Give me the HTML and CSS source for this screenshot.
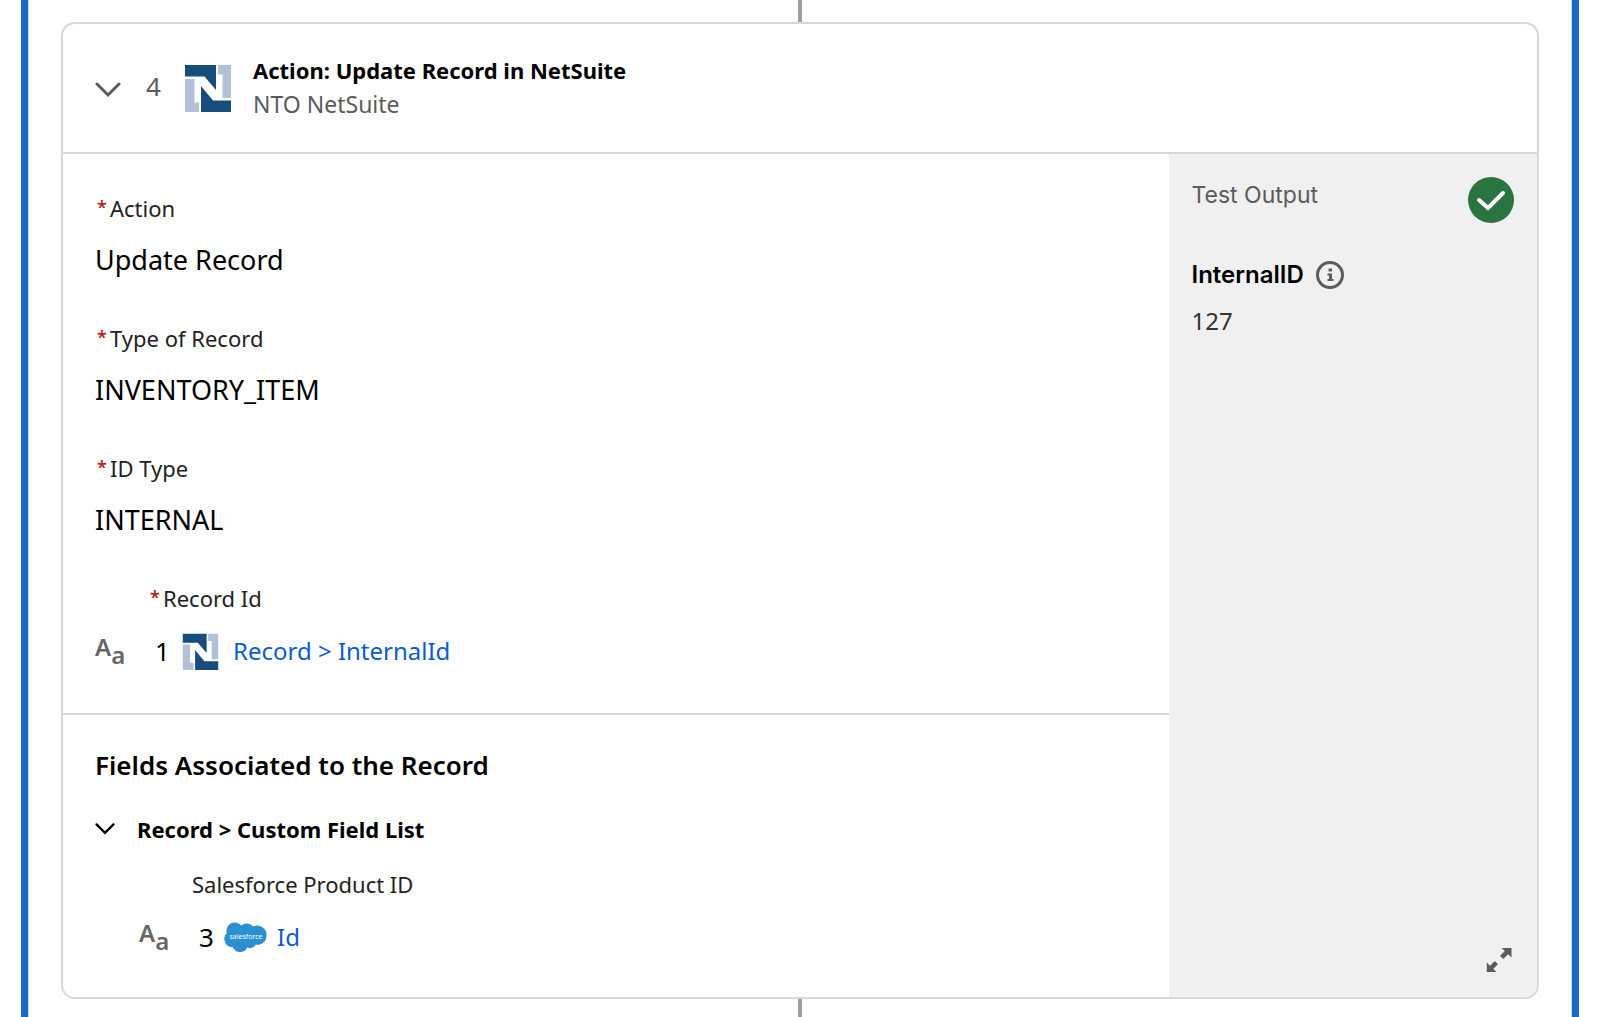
FILE: index.html
```
<!DOCTYPE html>
<html lang="en">

<head>
    <meta charset="UTF-8">
    <meta name="viewport" content="width=device-width, initial-scale=1.0">
    <title>Action: Update Record in NetSuite</title>
    <link rel="stylesheet" href="styles.css">
</head>

<body>
    <svg class="defs" aria-hidden="true">
        <symbol id="netsuite" viewBox="0 0 48 48">
            <path fill="#b1c1d7" d="M34 1h13v33H38.500V10.500H34zM1 15h9.500v23.500H15V48H1z" />
            <path fill="#174d7c" d="M1 1h31v25L20.500 12.500H1zM17 22l12 14.500h18V48H17z" />
        </symbol>
        <symbol id="chevron" viewBox="0 0 26 16">
            <path fill="none" stroke="currentColor" stroke-linecap="round" stroke-linejoin="miter" d="M2 2l11 11L24 2" />
        </symbol>
    </svg>

    <main class="flow">
        <div class="connector"></div>
        <article class="card">
            <header class="card-header">
                <button class="toggle" aria-label="Collapse step">
                    <svg class="chevron"><use href="#chevron" /></svg>
                </button>
                <span class="step">4</span>
                <svg class="logo"><use href="#netsuite" /></svg>
                <div class="heading">
                    <h1>Action: Update Record in NetSuite</h1>
                    <p class="connection">NTO NetSuite</p>
                </div>
            </header>

            <div class="card-body">
                <div class="details">
                    <section class="inputs">
                        <div class="field">
                            <div class="label"><span class="required">*</span>Action</div>
                            <div class="value">Update Record</div>
                        </div>
                        <div class="field">
                            <div class="label"><span class="required">*</span>Type of Record</div>
                            <div class="value">INVENTORY_ITEM</div>
                        </div>
                        <div class="field">
                            <div class="label"><span class="required">*</span>ID Type</div>
                            <div class="value">INTERNAL</div>
                        </div>
                        <div class="field">
                            <div class="label indent"><span class="required">*</span>Record Id</div>
                            <div class="mapping">
                                <span class="type"><b>A</b><b class="lower">a</b></span>
                                <span class="source">1</span>
                                <svg class="source-logo"><use href="#netsuite" /></svg>
                                <a href="#">Record &gt; InternalId</a>
                            </div>
                        </div>
                    </section>

                    <section class="associated">
                        <h2>Fields Associated to the Record</h2>
                        <div class="group">
                            <button class="toggle small" aria-label="Collapse list">
                                <svg class="chevron"><use href="#chevron" /></svg>
                            </button>
                            <h3>Record &gt; Custom Field List</h3>
                        </div>
                        <div class="nested">
                            <div class="label indent">Salesforce Product ID</div>
                            <div class="mapping">
                                <span class="type"><b>A</b><b class="lower">a</b></span>
                                <span class="source">3</span>
                                <svg class="cloud" viewBox="0 0 44 31">
                                    <path fill="#2b8fd0" d="M18.300 3.600A8 8 0 0 1 30.200 4.600 9.200 9.200 0 0 1 43.500 13.500 9 9 0 0 1 32.800 22.600 6.800 6.800 0 0 1 24.200 25.600 7.800 7.800 0 0 1 9.800 25 7 7 0 0 1 1.800 19.200 7.500 7.500 0 0 1 3.800 11 8.300 8.300 0 0 1 18.300 3.600z" />
                                    <text x="23" y="17" text-anchor="middle">salesforce</text>
                                </svg>
                                <a href="#">Id</a>
                            </div>
                        </div>
                    </section>
                </div>

                <aside class="output">
                    <div class="output-header">
                        <h4>Test Output</h4>
                        <svg class="success" viewBox="0 0 46 46">
                            <circle cx="23" cy="23" r="23" fill="#2a7442" />
                            <path fill="none" stroke="#fff" stroke-width="4" stroke-linecap="round" stroke-linejoin="miter" d="M11 23l9 8 15-15" />
                        </svg>
                    </div>
                    <div class="result">
                        <span class="result-name">InternalID</span>
                        <svg class="info" viewBox="0 0 28 28">
                            <circle cx="14" cy="14" r="12.500" fill="none" stroke="#5c5c5c" stroke-width="3" />
                            <path fill="#5c5c5c" d="M12.500 7.500h3.500v3h-3.500zM11.500 12.500H16V18h1.500v2h-6v-2H13v-3.500h-1.500z" />
                        </svg>
                    </div>
                    <div class="result-value">127</div>
                    <button class="expand" aria-label="Expand output">
                        <svg viewBox="0 0 26 26">
                            <path fill="#5c5c5c" d="M15.500 1H25.500V10.500L22.200 7.200 17.200 12 14 8.800 18.800 4zM10.500 25H.8V15.500L4 18.800 8.800 14 12 17.200 7.200 22z" />
                        </svg>
                    </button>
                </aside>
            </div>
        </article>
        <div class="connector last"></div>
    </main>
</body>

</html>
```
FILE: styles.css
```
* {
    box-sizing: border-box;
}

body {
    margin: 0;
    font-family: "Noto Sans", sans-serif;
    font-size: 22px;
    line-height: 32px;
    color: #000;
    background-color: #fff;
}

h1,
h2,
h3,
h4,
p {
    margin: 0;
    font-size: 22px;
}

svg {
    display: block;
    flex: none;
}

button {
    padding: 0;
    border: none;
    background: none;
    color: inherit;
    cursor: pointer;
}

a {
    color: #0b5cce;
    text-decoration: none;
}

.defs {
    display: none;
}

.flow {
    display: flex;
    flex-direction: column;
    min-height: 100vh;
    margin: 0 21px;
    padding: 0 33px;
    border: solid #1b6ac4;
    border-width: 0 7px;
    box-shadow: inset 1px 0 #c9d8ee, inset -1px 0 #c9d8ee;
}

.connector {
    width: 4px;
    height: 22px;
    margin: 0 auto;
    background-color: #a0a0a0;
}

.connector.last {
    flex: 1;
    height: auto;
    min-height: 18px;
}

.card {
    border: 2px solid #d8d8d8;
    border-radius: 14px;
    overflow: hidden;
}

.card-header {
    display: flex;
    align-items: center;
    height: 130px;
    padding: 0 32px;
    border-bottom: 2px solid #d8d8d8;
}

.toggle {
    width: 26px;
    margin-right: 25px;
    padding-top: 4px;
    color: #5c5c5c;
}

.chevron {
    width: 100%;
    height: 16px;
    stroke-width: 3px;
}

.step {
    width: 38px;
    padding-bottom: 4px;
    font-size: 26px;
    color: #5c5c5c;
}

.logo {
    width: 48px;
    height: 48px;
    margin-right: 21px;
}

.heading {
    padding-bottom: 3px;
    line-height: 34px;
}

.connection {
    font-size: 23px;
    color: #5c5c5c;
}

.card-body {
    display: flex;
}

.details {
    flex: 1;
}

.inputs {
    padding: 38px 32px 43px;
    border-bottom: 2px solid #d8d8d8;
}

.field + .field {
    margin-top: 44px;
}

.label {
    margin-bottom: 18px;
    color: #222;
}

.label.indent {
    padding-left: 53px;
}

.required {
    display: inline-block;
    width: 15px;
    padding-left: 2px;
    font-size: 18px;
    font-weight: 600;
    line-height: 30px;
    vertical-align: top;
    color: #b5281e;
}

.value {
    font-size: 27px;
    line-height: 36px;
}

.mapping {
    display: flex;
    align-items: center;
    height: 38px;
    font-size: 24px;
    line-height: 36px;
}

.type {
    display: flex;
    width: 60px;
    padding-bottom: 8px;
    line-height: 28px;
    color: #666;
}

.type b {
    font-weight: 600;
}

.type .lower {
    margin-top: 8px;
    margin-bottom: -8px;
}

.source {
    width: 27px;
    font-size: 26px;
}

.source-logo {
    width: 37px;
    height: 37px;
    margin-right: 14px;
}

.associated {
    padding: 32px 32px 41px;
}

h2 {
    font-size: 26px;
    font-weight: 600;
    line-height: 36px;
}

.group {
    display: flex;
    align-items: center;
    margin: 30px 0 23px;
}

.toggle.small {
    width: 20px;
    margin-right: 22px;
    padding-top: 0;
    color: #000;
}

.nested {
    padding-left: 44px;
}

.nested .source {
    width: 24px;
}

.cloud {
    width: 44px;
    height: 31px;
    margin-right: 10px;
}

.cloud text {
    font-size: 7px;
    fill: #fff;
}

.output {
    display: flex;
    flex: 0 0 25%;
    flex-direction: column;
    padding: 23px 23px 24px;
    background-color: #f0f0f0;
}

.output-header {
    display: flex;
    justify-content: space-between;
    margin-bottom: 36px;
}

h4 {
    font-family: Inter, sans-serif;
    font-size: 23px;
    font-weight: 400;
    line-height: 36px;
    color: #5c5c5c;
}

.success {
    width: 46px;
    height: 46px;
}

.result {
    display: flex;
    align-items: center;
    gap: 12px;
    margin-bottom: 14px;
}

.result-name {
    font-family: Inter, sans-serif;
    font-size: 24px;
    font-weight: 600;
}

.info {
    width: 28px;
    height: 28px;
}

.result-value {
    font-size: 24px;
    color: #333;
}

.expand {
    width: 26px;
    height: 26px;
    margin-top: auto;
    margin-right: 2px;
    margin-left: auto;
}
```
